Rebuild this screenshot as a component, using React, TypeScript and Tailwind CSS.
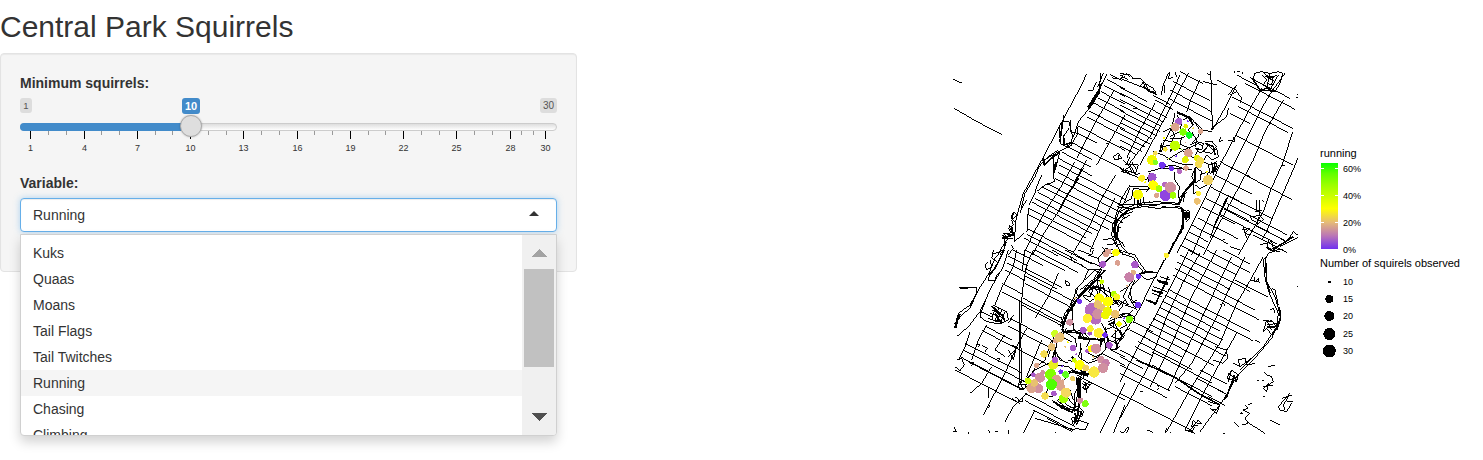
import React from "react";

type Street = [number, number, number];
type Dot = [number, number, number, string];

interface Tile {
  x: number;
  y: number;
  streets: Street[];
  avenues: string;
  detail: string;
  thick: string;
  dots: Dot[];
}

const P = "#7030f0";
const V = "#a858c8";
const M = "#d090a0";
const T = "#dba58c";
const S = "#e8c070";
const G = "#f5dc50";
const Y = "#ffff00";

// The map is drawn in overlapping tiles, each at three units to the pixel.
const tiles: Tile[] = [
  {
    x: 945,
    y: 65,
    streets: [
      [495, 28, 35], [487, 44, 53], [478, 62, 62], [468, 80, 72], [458, 98, 80], [448, 115, 92],
      [432, 138, 108], [425, 155, 105], [398, 182, 142], [395, 203, 60], [385, 235, 155],
      [362, 242, 80], [352, 262, 85], [340, 280, 100], [342, 300, 198], [338, 322, 202], [330, 340, 200],
      [305, 355, 215], [292, 366, 235], [278, 382, 215], [270, 400, 190], [262, 412, 180],
      [252, 430, 170], [248, 448, 200], [246, 490, 130], [246, 508, 150], [238, 520, 100],
    ],
    avenues:
      "M25 43L52 55M28 130L90 167L170 208M424 28L410 60L356 160L330 210L292 282L260 340L235 385L222 430L212 470L208 530M508 75L455 165L395 280M540 150L500 220L455 300M512 330L470 400L435 480L380 570M390 290L345 370L300 440L265 505L235 570M415 310L385 360L340 440L300 500L262 570M425 285L400 330L388 350M250 430L246 500M290 330L275 365L270 385L252 420",
    detail:
      "M475 25L462 55L465 68L428 125M468 25L466 50L458 65M485 28L470 60L445 115L400 170L385 215M430 76L442 78L455 50M357 150V170L350 172L343 185L346 235L362 245L380 235L382 210L372 170L357 170M372 190L355 215V240M378 165V200L398 205M396 185L398 205L380 240L350 255L298 285V300M343 265L335 300L325 330L328 350L300 360L275 380M325 265V330M340 255L310 275L292 292L280 310L270 335L240 385L228 430M330 270L300 300M245 405L232 425L225 445M205 440L215 450L200 465L205 480L190 490L205 510L180 505L172 520L205 522M175 505L190 520L175 540L160 565M205 440L198 460L210 470M192 480L200 500L185 510M207 530L238 505M170 510L180 520L178 550L165 570M185 530L170 570M145 565L165 562M200 540L205 550L190 570M505 275L520 265L530 280L510 285ZM520 270V285M484 235H490M535 310L530 320L540 322M500 38L520 42M535 28L530 38L540 35M540 410L520 445L510 470V500L525 530M540 455L520 480L518 520L540 545M520 465L535 475M475 525L500 520L510 510M470 545L480 555L475 565M535 530L520 540",
    thick: "M470 55L462 75L430 125L432 130L465 80M512 460L506 500L518 525M355 210L358 240L382 232M345 262L325 275L298 300L293 280M333 290L325 325M352 175L345 230M400 340L370 385L340 440M200 485L205 510L175 518M206 440L200 462",
    dots: [],
  },
  {
    x: 1120,
    y: 65,
    streets: [
      [180, 20, 70], [290, 45, 60], [160, 50, 110], [150, 75, 125], [145, 100, 130],
      [0, 67, 80], [0, 84, 140], [0, 103, 130], [0, 120, 120], [0, 137, 120], [0, 155, 110], [0, 172, 95],
      [0, 190, 90], [0, 207, 75], [0, 225, 65], [0, 243, 50], [100, 92, 50], [105, 105, 55],
      [350, 30, 60], [375, 55, 150], [390, 38, 120], [335, 95, 185], [355, 125, 150], [330, 145, 60],
      [345, 210, 175], [300, 290, 80], [375, 330, 140], [285, 330, 110], [270, 365, 100], [258, 400, 130],
      [245, 425, 100], [325, 392, 130], [320, 415, 180], [312, 432, 180], [300, 448, 170], [235, 460, 120],
      [215, 480, 110], [205, 500, 60], [195, 520, 60], [180, 540, 60], [415, 485, 80], [400, 510, 100],
    ],
    avenues:
      "M145 25L130 60L123 90M205 25L150 130L105 215L60 300M180 30L155 85L90 215L25 300M105 115L60 195L20 280M272 18L275 100L277 195M277 195L320 120L350 60M250 50L290 60M240 45L210 110L200 140M495 25L455 80L425 130L345 290L305 375L245 500L215 570M425 70L385 140L345 215L300 300L245 420L190 530L170 565M490 105L435 200L400 285L360 360L285 500L250 570M518 200L490 290L450 380L430 440L395 500L355 570M540 265L500 360L465 440L440 500L425 525M325 395L285 480L270 520M5 460L20 440L60 422L110 430L180 425L192 440L190 490L165 530L145 570",
    detail:
      "M0 25L30 30L40 42L60 40L75 55L100 70L108 85L85 80L75 70L50 60L20 48L0 40M0 30L25 45M60 65L70 50L75 70L90 75M20 25L28 35M75 55L85 75L110 90M135 60V85M150 22L145 40L160 38M165 20L170 35M260 25L272 30M345 18V25M350 20L360 18M365 20L370 28M398 45L405 25L425 20L450 25L475 20L488 25L480 55L465 80L440 70L420 75L398 45M425 30L440 45L430 60L450 72L465 50L450 40L470 30M430 20L445 40L460 35L455 60L440 55M435 35H465M450 25L440 70M475 30L455 65M330 90L350 80L365 100L360 115M325 90L345 65M280 185L320 155L325 130M302 215L298 230L308 225M325 225L345 230L340 215M40 132H55M30 275L20 295L10 285L30 305L15 315L45 325L30 300L55 300L45 330L60 325M20 290L35 320M35 290L50 315M15 300H55M10 320L75 345M0 310L30 325M35 365H85V375L40 370L35 400L10 415M75 345L85 340L90 370L80 380M45 390V415M55 395V415M63 395V420M70 395L72 415L90 410M0 440L30 425L55 415L110 410L180 415L185 400L200 380M0 452L30 430L110 420M125 425L185 430L200 440M200 435L210 440L205 460L195 450M195 440L185 500L155 540M210 440V460L200 470M175 420L180 395L220 355L225 320M215 350L195 380L190 410M170 140L190 148L215 160L240 195L235 215L215 235M165 145L155 190L130 235L125 260M170 150L185 170L180 200L150 215M190 165L210 155L220 180L205 195L225 215M130 200L150 190L165 210L155 230L130 225M120 250L145 240L180 250L200 270L225 280M100 260L130 270L160 290L195 300L220 300M140 285L165 270L190 255L215 245L235 235L250 245M225 170L250 195L275 200M215 200L230 225L225 245M245 190L240 210M210 240L230 230L250 235L245 255L225 250L240 265L260 250M255 230L275 228L290 245L280 255L265 240L250 260L275 265L290 250L295 275L275 285L260 270L250 290L270 300L290 290M265 300L290 295L285 320L270 325L265 300M275 290L280 330M290 300L275 320M225 305L245 320L240 345L225 355L215 335L225 310M240 330L265 320L260 340L245 350M225 360L240 370L260 360L255 345M220 355V385L240 380M85 320L115 312L170 310L215 315M165 320V345L178 365L175 400M90 325L80 345M135 305L160 300L190 310M160 235L185 240L210 250M150 220H185L195 215M185 215L180 240M235 250L225 275L240 300M400 455L420 450L430 465L415 475L395 465L390 450M410 405V440M418 405V450M425 405L430 410M405 440L425 435M415 455L410 485M365 495L390 490L375 505L390 510M370 485L380 520M330 545L360 555M310 525H315M420 540L455 530L460 550L490 555M445 525L440 550L465 560M520 500L540 515L480 545M520 500L500 530L450 555M380 330L390 335M486 300L495 303M530 90H540M528 97H540M295 300L285 320M250 350L258 340",
    thick: "M182 425L190 450L186 490L165 530L145 568M170 142L205 158L220 180M125 235L120 260M398 42L420 75L465 78M440 30L455 45M255 235L280 245L285 270M285 290L280 330M225 310V350M224 345L190 385L180 415M320 400L280 490M277 188V196M165 235L150 260M70 65L82 72M95 78L108 88M440 545L460 560M460 553L520 515M198 440V465M205 440V460",
    dots: [
      [176, 170, 11, "#a55fd0"], [203, 169, 3, P], [197, 184, 7, "#e8f000"], [166, 187, 13, T], [189, 201, 11, "#80ff00"],
      [208, 211, 10, "#10ff20"], [242, 199, 8, T], [220, 190, 3, G], [152, 182, 2, "#80ff00"], [133, 219, 3, Y],
      [165, 242, 15, "#bfff00"], [136, 253, 7, "#f8e840"], [196, 232, 2, T], [205, 264, 13, "#d9a090"], [106, 265, 7, G],
      [96, 285, 15, "#f0f800"], [106, 292, 8, "#80ff20"], [146, 280, 2, "#ccff00"], [169, 274, 3, P], [184, 253, 2, "#80ff00"],
      [196, 284, 10, "#e0f000"], [231, 279, 9, "#e8f000"], [241, 287, 11, G], [236, 298, 11, G], [127, 301, 10, P],
      [154, 310, 8, P], [178, 319, 8, "#b568c0"], [198, 309, 8, T], [260, 320, 3, Y], [264, 345, 15, "#f0d060"],
      [65, 340, 10, "#fff020"], [97, 337, 13, "#a055d0"], [76, 352, 3, Y], [100, 361, 15, Y], [134, 358, 8, "#b568c0"],
      [136, 391, 17, "#9045e0"], [151, 367, 17, M], [117, 371, 10, "#a8ff00"], [159, 391, 10, "#a0ff00"], [110, 391, 8, T],
      [54, 389, 15, "#f8fc00"], [235, 385, 8, "#fff030"], [232, 409, 10, "#ecc070"], [139, 570, 7, "#fff030"],
    ],
  },
  {
    x: 945,
    y: 250,
    streets: [
      [205, 0, 90], [240, 0, 120], [190, 18, 60], [185, 38, 150], [180, 60, 60], [240, 55, 110], [240, 78, 150],
      [240, 100, 140], [170, 100, 60], [170, 125, 180], [235, 145, 115], [230, 165, 120], [195, 205, 130], [190, 228, 130],
      [110, 185, 35], [120, 228, 80], [112, 242, 200], [60, 280, 170], [55, 300, 195], [45, 320, 190], [70, 335, 155],
      [30, 360, 195], [240, 430, 100], [240, 452, 150], [265, 480, 120], [305, 505, 75], [395, 375, 145], [270, 0, 130],
      [320, 0, 100], [360, 0, 80], [470, 310, 70], [480, 290, 60],
    ],
    avenues:
      "M190 0L175 50L140 110L105 185L70 230L35 260M215 0L205 50L172 110L150 165M265 0L245 45L235 100L230 150L226 290M240 0L232 60M223 150L225 290L222 400M228 290L229 400M340 70L310 140L270 205M400 110L365 190M130 130L105 195M245 235L215 290L180 370L115 495M125 225L100 270L80 330M75 245L60 290L40 330M220 290L190 320M140 350L110 400L75 430M245 430L205 470L180 515M270 480L250 520L235 550M290 270L245 380M540 400L500 480L465 550M540 465L505 550M170 0L150 25L132 70L100 120L92 135L75 165L40 190L28 235M320 270L300 330L270 355L240 400M330 250L310 320",
    detail:
      "M130 35L120 45L125 60L140 50L135 30M135 70L130 90L150 92L155 75L170 60M145 0L140 25L155 35M42 114H95L95 128M45 116H70M100 120L75 175L50 195L35 215L35 235M28 220H38M145 165L185 185L190 210L165 222L125 215L105 200L110 180M150 175L140 210M160 175L150 215M170 180L155 215M180 185L165 220M135 190L180 205M130 205L170 218M140 180L175 195M150 175L165 200M145 190L170 215M205 195L190 220M95 285H105L100 292M110 285L128 295L120 305M155 325H165L160 335M178 255L150 300L180 320M195 285L215 290L205 330L190 300M75 340L85 335L80 348M35 330L50 325L58 345L45 362L30 350M220 400L235 390L245 400L240 415L225 420L220 405M218 405H245M225 395L235 420M200 445L215 455M210 440L225 452M232 440V455L218 452M130 475L135 465M130 415V445M28 530L32 545M25 545H35M70 545V552M130 540L135 548M150 545H160M190 540L192 552M330 545L335 550M360 92L370 95L375 105L365 108ZM375 20L385 35L410 45L430 60L470 60M375 0L395 15L430 35L470 50M400 0L440 15L445 0M430 15L460 25L480 0M460 25L465 50L500 20M480 60L460 80L455 110L435 120M470 60L455 90L440 105L415 130L400 145L385 170L360 200L350 240M480 0L500 10L530 0M410 130L430 100L450 85L470 80L465 120L480 130M440 110L460 125L450 140L430 125ZM400 140L390 120L415 95L430 60M420 90L450 60L470 75M350 200L355 245L380 240L410 250L420 270M380 170L385 240M350 240L390 265L395 290M350 245L335 270L330 330L310 340L270 360L245 385M365 235L350 260L380 275M410 245L400 265L440 270L480 265M480 130L500 150L495 180L510 200L505 230L480 240L470 220M500 160L520 150L540 160M520 170L540 150M495 205L540 190M505 215L520 240L500 260L530 270L540 255M480 230L490 270L480 300L460 320L440 330M490 270L520 280L530 265M510 240L515 300M410 295L400 320L430 340L460 330M370 330L400 340L430 360L410 370L380 360L365 380L350 400M385 360L370 350L340 345M410 365L405 400L390 430L390 470L365 440L340 450M400 380V490M395 370L420 375L410 390M410 400L430 410L440 400L420 420L410 410M420 395L425 430M415 410L435 395M380 480L400 480L410 490L395 520L385 515L400 490M320 450L345 465L385 490M330 460L350 475M345 455L360 475L380 480M310 410L300 440L325 440M385 500L395 525L405 500M370 475L400 470L415 485L410 500M350 410L375 420L385 450M430 370L450 360L480 360M330 300L345 330L370 340M350 330L340 320L325 325M400 510L430 520L420 540L390 535M270 505L390 540",
    thick: "M178 0L150 55L133 75M95 130L75 170M45 192L28 235M480 60L455 90L410 130L370 185L352 235M352 235L355 245L420 250M410 265L480 270M440 110L475 115M395 385L402 450L398 500L388 520M405 360L430 375M380 320L400 340M326 455L360 478L385 488M480 245L490 270L480 290M332 290L322 330M140 168L175 200L180 215M150 190L165 215M505 145L520 165M240 410L250 415M380 365L430 378M455 265L470 275L465 290",
    dots: [
      [490, 5, 9, "#dba090"], [483, 13, 9, "#dba090"], [513, 8, 11, Y], [473, 43, 10, V], [518, 39, 8, "#dba090"],
      [470, 95, 7, "#ccff00"], [403, 154, 8, P], [391, 145, 3, S], [506, 132, 9, "#b0ff00"], [515, 141, 10, "#f8f820"],
      [440, 180, 21, "#b56abf"], [452, 207, 17, "#b56abf"], [427, 205, 14, "#fff030"], [463, 145, 15, Y], [489, 155, 15, Y],
      [458, 163, 12, S], [468, 172, 12, S], [458, 192, 16, M], [487, 184, 14, "#eef500"], [481, 195, 13, "#eef500"],
      [511, 193, 13, "#ebc070"], [522, 222, 8, "#e8ff00"], [374, 217, 10, M], [415, 241, 10, V], [434, 250, 7, V],
      [436, 236, 10, "#f8f030"], [461, 249, 15, "#fff030"], [480, 255, 8, P], [508, 241, 2, S], [333, 272, 8, T],
      [330, 251, 11, "#ccff20"], [344, 262, 15, S], [368, 277, 3, Y], [361, 290, 3, S], [320, 291, 11, S], [384, 294, 9, V],
      [394, 313, 3, V], [297, 312, 11, G], [428, 303, 7, V], [438, 296, 10, Y], [453, 296, 15, M], [493, 286, 10, V],
      [445, 320, 3, S], [325, 344, 15, "#e8f020"], [330, 330, 9, V], [388, 331, 7, "#ccff00"], [275, 346, 8, T],
      [404, 345, 15, Y], [422, 354, 10, "#f0d060"], [468, 329, 11, M], [483, 338, 11, "#c880a8"], [447, 366, 17, "#f8e840"],
      [474, 354, 15, M], [352, 349, 3, P], [347, 365, 7, P], [362, 374, 10, "#60ff20"], [317, 373, 17, "#80ff00"],
      [265, 374, 7, V], [293, 367, 7, M], [285, 383, 15, M], [280, 415, 15, M], [259, 415, 15, T], [268, 399, 11, S],
      [249, 393, 10, "#ccff00"], [334, 388, 14, "#dba090"], [319, 404, 17, "#50ff00"], [347, 410, 13, T], [352, 394, 6, T],
      [383, 386, 8, "#f0d060"], [355, 446, 14, "#a0ff00"], [363, 428, 15, "#f5d860"], [300, 438, 11, G], [327, 431, 8, V],
      [406, 452, 9, M], [421, 461, 10, "#80ff10"],
    ],
  },
  {
    x: 1120,
    y: 250,
    streets: [
      [205, 0, 145], [260, 0, 130], [310, 0, 80], [180, 15, 210], [170, 35, 160], [165, 55, 240], [345, 90, 100], [158, 75, 260],
      [145, 118, 245], [135, 135, 265], [130, 155, 170], [120, 172, 190], [108, 190, 190], [98, 205, 210],
      [88, 222, 120], [78, 240, 205], [60, 255, 130], [55, 275, 160], [45, 290, 50], [0, 300, 55],
      [95, 305, 180], [95, 345, 180], [0, 320, 70], [0, 345, 150], [0, 370, 140], [0, 430, 220],
      [240, 360, 80], [230, 385, 80], [165, 410, 110], [280, 412, 40], [265, 440, 50], [40, 215, 60], [30, 240, 70],
    ],
    avenues:
      "M205 5L165 85L100 210L55 290L0 395M240 10L190 95L140 200L85 350L0 505M290 0L215 140L165 260L110 370L90 410M335 20L300 90L240 215L180 340L145 420M375 20L330 110L285 210L215 340L165 400M430 20L380 110L350 160L300 280L215 410L140 545M350 250L310 320L250 430L195 540M470 0L445 10L435 30L440 95L465 140L482 200L455 265L400 330L350 380L310 450L240 545M440 20L430 30L436 90L450 135L475 190L470 230L430 290L360 360",
    detail:
      "M60 72L80 90L110 80M45 90L30 120L35 150L55 165M0 125L25 110L10 140L25 165L0 155M25 110L40 90M15 165L45 175L60 165M35 160L50 150M5 190L30 190L40 180M0 200L20 190L45 200L40 220M0 235L20 225L10 210M0 265L15 245L30 235M450 0L480 5M100 110L140 125M95 130L125 140M85 150L110 160M120 80L150 90M115 95L145 105M300 165L310 160L315 168M405 80V95L415 85L418 100M390 90L415 95M455 115L465 120L475 165M450 180L460 175L465 190M430 210L460 215L470 235L455 255L440 235L430 245L440 210L455 240M445 215L455 210L465 225M440 225L470 220M405 270L420 278M285 290L320 300L322 325L310 340L280 330M310 320L318 315M340 340L360 350L355 330L375 325L380 345L405 340M320 385L350 395L355 375L335 360ZM325 370L345 385M335 360L325 395M445 350L465 345M430 365L440 375L455 380L460 395L445 405L440 425L430 415L445 400M430 410L460 405M410 393H418M430 440H435M450 510L480 525M510 430L475 470L480 480L500 485L515 460M505 440L490 465L495 480M500 455L520 455M485 445L515 435M375 465L385 475L370 480L390 490L375 505L385 520L365 525M385 465L395 460M360 490H370M380 515L435 550M340 515L355 530M60 425H68M110 405L118 412L110 420M82 540L100 548M0 545L10 550L20 535L28 530L20 550M140 535L135 550M150 545L155 550M210 540L235 510L245 520L230 520L220 510L215 530L235 525M215 545L225 530M530 110L540 105M265 455L300 465L290 490L270 475M275 480L290 480M195 540L225 550M360 350L400 320M310 550H315",
    thick: "M145 80L105 165M50 330L95 350L170 385L235 430L300 465M110 90L145 100M95 120L130 130M78 150L110 162M440 40L440 95L450 130M478 170L482 205L470 240M340 375L350 395M425 392H432M365 487V492M205 540L220 548M340 385L320 440L310 450M440 232L465 230M0 240L8 260",
    dots: [
      [45, 44, 11, V], [40, 67, 8, "#e0b080"], [28, 82, 15, "#c880a8"], [55, 79, 8, P], [22, 107, 3, "#e0b080"],
      [54, 165, 9, P], [13, 205, 3, P], [28, 208, 11, "#80ff00"], [0, 222, 6, Y], [139, 16, 8, "#fff030"],
    ],
  },
  {
    // Reservoir and the paths round it
    x: 1040,
    y: 65,
    streets: [],
    avenues:
      "M270 450L245 465L232 485L230 515L245 545L270 570M280 440L250 450L228 470L222 510L235 550L250 570M220 470L215 510L230 545M225 400L185 480L150 560M270 360L245 400L225 460",
    detail:
      "M270 365H325M270 368L250 420L230 425L270 430L240 455M285 395V420M293 405V425M301 400V422M235 420H330L380 415L420 420M190 525L215 520L235 540M200 540L230 535M195 550L240 560",
    thick: "M258 440L232 465L224 495L230 525",
    dots: [],
  },
  {
    // The Lake, the Ramble and the south end
    x: 1040,
    y: 250,
    streets: [],
    avenues:
      "M60 230L75 190L110 140L150 105L175 65L205 25L250 5L285 15L303 45L320 65M68 225L85 185L120 135L160 95L185 60M250 12L280 22L297 50L315 72M380 20L355 65L330 110L300 175L240 270L225 300M372 30L350 75M300 85L275 110L265 140L290 180M95 150L100 235L125 260",
    detail:
      "M120 120L140 105L160 115L150 140L130 135M155 100L170 120L190 115L200 140M165 85L185 95L195 120L215 130M130 140L150 155L165 145M175 105L180 135M205 110L215 150L235 160M215 165L235 155L250 165L235 185M205 215L225 205L250 200L275 195M210 225L235 240L245 260L225 280M190 265L200 290L220 300L240 290M120 260L145 265L195 270M115 240L135 250L150 270L140 290M120 280L125 330L105 360M145 310L165 320L190 310M85 365L140 375M95 358L115 370L145 372M110 380L115 420L105 470M120 380L122 450L110 500M130 395L150 405L140 420L125 410M50 450L75 470L105 485M65 440L80 465L110 480M95 480L125 485L115 510L100 525L95 505L120 495",
    thick: "M298 72L320 65L350 68M150 115L175 110M205 225L225 215M115 260L135 268M95 362L135 374M118 385V470M105 490L110 515M225 270L235 295",
    dots: [],
  },
];

const streetPath = (streets: Street[]) =>
  streets.map(([x, y, dx]) => `M${x} ${y}l${dx} ${Math.round(dx * 0.52)}`).join("");

function ParkMap() {
  return (
    <svg width="345" height="363" viewBox="953 71 345 363" className="shrink-0" shapeRendering="crispEdges">
      {tiles.map((t, i) => (
        <g key={i} transform={`translate(${t.x} ${t.y}) scale(0.33333)`} fill="none" stroke="#000" strokeWidth="3">
          <path d={streetPath(t.streets)} />
          <path d={t.avenues} />
          <path d={t.detail} />
          <path d={t.thick} strokeWidth="5" />
        </g>
      ))}
      {tiles.map((t, i) => (
        <g key={i} transform={`translate(${t.x} ${t.y}) scale(0.33333)`}>
          {t.dots.map(([x, y, r, c], j) => (
            <circle key={j} cx={x} cy={y} r={r} fill={c} />
          ))}
        </g>
      ))}
    </svg>
  );
}

const sizes = [
  { n: 10, r: 1.5 },
  { n: 15, r: 4 },
  { n: 20, r: 5 },
  { n: 25, r: 6 },
  { n: 30, r: 6.5 },
];

function Legend() {
  return (
    <div className="ml-[22px] pt-[75px] text-[11px] leading-[14px] text-black">
      <div>running</div>
      <div className="mt-[3px] flex">
        <svg width="17" height="86" className="ml-px shrink-0" shapeRendering="crispEdges">
          <defs>
            <linearGradient id="share" x1="0" y1="0" x2="0" y2="1">
              <stop offset="0" stopColor="#08ff00" />
              <stop offset="0.12" stopColor="#60ff00" />
              <stop offset="0.25" stopColor="#99ff00" />
              <stop offset="0.4" stopColor="#d0ff00" />
              <stop offset="0.53" stopColor="#ffff00" />
              <stop offset="0.69" stopColor="#e6bb78" />
              <stop offset="0.85" stopColor="#b974b8" />
              <stop offset="1" stopColor="#7030f0" />
            </linearGradient>
          </defs>
          <rect width="17" height="86" fill="url(#share)" />
          <path d="M0 5.5H3M14 5.5H17M0 32.5H3M14 32.5H17M0 59.5H3M14 59.5H17" stroke="#fff" />
        </svg>
        <div className="-mt-[7px] -mb-[15px] ml-[5px] flex flex-col text-[9px] leading-[27px]">
          <span>60%</span>
          <span>40%</span>
          <span>20%</span>
          <span>0%</span>
        </div>
      </div>
      <div className="mt-[7px] whitespace-nowrap tracking-[-0.03px]">Number of squirels observed</div>
      <div className="mt-[3px] flex flex-col">
        {sizes.map((s) => (
          <div key={s.n} className="flex h-[17.4px] items-center text-[9px]">
            <svg width="18" height="16" className="mr-[5px]" shapeRendering="crispEdges">
              <circle cx="9.3" cy="8" r={s.r} />
            </svg>
            <span>{s.n}</span>
          </div>
        ))}
      </div>
    </div>
  );
}

const majorTicks: [number, number][] = [
  [10, 1], [64, 4], [117, 7], [170, 10], [223, 13], [277, 16], [330, 19], [383, 22], [436, 25], [490, 28], [525, 30],
];
const minorTicks = [28, 46, 81, 99, 135, 152, 188, 206, 241, 259, 294, 312, 348, 365, 401, 419, 454, 472, 501, 513];

function Slider() {
  return (
    <div className="mt-[5px] h-[60px]">
      <div className="flex h-4 items-start text-[10px] leading-[15px] text-[#333]">
        <span className="h-[15px] w-3 rounded-[3px] bg-[#dddddd] text-center text-[9.5px] text-[#555]">1</span>
        <span className="ml-[150px] h-4 w-[18px] rounded-[3px] bg-[#428bca] text-center text-[11px] font-bold leading-4 text-white">
          10
        </span>
        <span className="ml-auto h-[15px] w-[17px] rounded-[3px] bg-[#dddddd] text-center text-[#555]">30</span>
      </div>
      <div className="relative mt-[9px] h-2 rounded-lg border border-[#cccccc] bg-gradient-to-b from-[#dedede] to-white">
        <div className="-ml-px -mt-px h-2 w-[171px] rounded-l-lg bg-[#428bca]" />
        <div className="absolute left-[159px] top-[-9px] z-10 h-[22px] w-[22px] rounded-full border border-[#ababab] bg-[#dedede] shadow-[0_0_2px_rgba(0,0,0,0.25)]" />
      </div>
      <svg width="537" height="24" className="block text-[9px]">
        <g shapeRendering="crispEdges">
          {majorTicks.map(([x]) => (
            <rect key={x} x={x} y="0" width="1" height="8" fill="#000" />
          ))}
          {minorTicks.map((x) => (
            <rect key={x} x={x} y="0" width="1" height="4" fill="#999" />
          ))}
        </g>
        {majorTicks.map(([x, n]) => (
          <text key={n} x={x + 0.5} y="20" textAnchor="middle" fill="#333">
            {n}
          </text>
        ))}
      </svg>
    </div>
  );
}

const options = ["Kuks", "Quaas", "Moans", "Tail Flags", "Tail Twitches", "Running", "Chasing", "Climbing"];

function Select() {
  return (
    <div className="relative mt-[5px] text-sm text-[#333]">
      <div className="flex h-[34px] items-center justify-between rounded border border-[#66afe9] bg-white pl-3 pr-[17px] shadow-[inset_0_1px_1px_rgba(0,0,0,0.075),0_0_6px_rgba(102,175,233,0.5)]">
        <span>Running</span>
        <svg width="10" height="5" className="-mt-[3px]">
          <path d="M0 5L5 0L10 5Z" fill="#333" />
        </svg>
      </div>
      <div className="absolute left-0 top-9 z-20 flex h-[202px] w-[537px] overflow-hidden rounded-b border border-[#d0d0d0] bg-white shadow-[0_6px_12px_rgba(0,0,0,0.175)]">
        <ul className="flex-1 pt-[5px]">
          {options.map((o) => (
            <li key={o} className={o === "Running" ? "h-[26px] bg-[#f5f5f5] pl-3 leading-[26px]" : "h-[26px] pl-3 leading-[26px]"}>
              {o}
            </li>
          ))}
        </ul>
        <div className="flex w-[34px] flex-col items-center bg-[#f0f0f0]">
          <svg width="34" height="34" className="shrink-0" shapeRendering="crispEdges">
            <path d="M9 22L17 14L25 22Z" fill="#a3a3a3" />
          </svg>
          <div className="h-[98px] w-[30px] shrink-0 bg-[#c1c1c1]" />
          <svg width="34" height="34" className="mb-[1px] mt-auto shrink-0" shapeRendering="crispEdges">
            <path d="M9 13L17 21L25 13Z" fill="#505050" />
          </svg>
        </div>
      </div>
    </div>
  );
}

export default function App() {
  return (
    <div className="flex h-[460px] w-[1483px] overflow-hidden bg-white font-['Liberation_Sans',Arial,sans-serif] text-[#333]">
      <div className="w-[577px] shrink-0">
        <h2 className="my-[10px] text-[30px] leading-[33px]">Central Park Squirrels</h2>
        <div className="h-[219px] rounded border border-[#e3e3e3] bg-[#f5f5f5] p-[19px] shadow-[inset_0_1px_1px_rgba(0,0,0,0.05)]">
          <div className="text-sm font-bold leading-5">Minimum squirrels:</div>
          <Slider />
          <div className="mt-[15px] text-sm font-bold leading-5">Variable:</div>
          <Select />
        </div>
      </div>
      <div className="ml-[376px] flex items-start pt-[71px]">
        <ParkMap />
        <Legend />
      </div>
    </div>
  );
}
